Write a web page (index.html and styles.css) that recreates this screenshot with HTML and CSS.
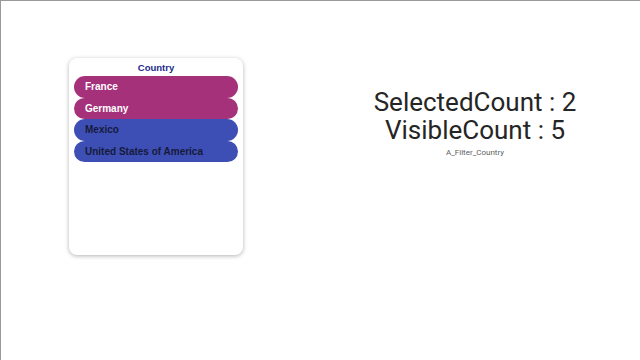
FILE: index.html
```html
<!DOCTYPE html>
<html lang="en">
<head>
  <meta charset="UTF-8" />
  <meta name="viewport" content="width=device-width, initial-scale=1.0" />
  <title>A_Filter_Country</title>
  <link rel="stylesheet" href="styles.css">
</head>
<body>
  <div class="page">
    <div class="card">
      <div class="card-title">Country</div>
      <div class="list">
        <div class="item selected">France</div>
        <div class="item selected">Germany</div>
        <div class="item">Mexico</div>
        <div class="item">United States of America</div>
      </div>
    </div>
    <div class="counts">
      <div class="count">SelectedCount : 2</div>
      <div class="count">VisibleCount : 5</div>
      <div class="caption">A_Filter_Country</div>
    </div>
  </div>
</body>
</html>
```

FILE: styles.css
```css
:root {
  --magenta: #a5317a;
  --azul: #3d4fb5;
  --navy: #1b2a8c;
  --tinta: #161a3a;
}
html, body {
  margin: 0;
  height: 100%;
}
body {
  box-sizing: border-box;
  border-top: 1px solid #9a9a9a;
  border-left: 1px solid #9a9a9a;
  background: white;
  font-family: 'Liberation Sans', Arial, sans-serif;
}
.page {
  display: flex;
  align-items: flex-start;
  padding: 57px 0 0 68px;
}
.card {
  width: 174px;
  height: 197px;
  box-sizing: border-box;
  background: white;
  border-radius: 8px;
  box-shadow: 0 1px 4px rgba(0, 0, 0, 0.3);
  padding: 2px 5px;
}
.card-title {
  text-align: center;
  color: var(--navy);
  font-weight: bold;
  font-size: 9.5px;
  line-height: 15px;
}
.list {
  display: flex;
  flex-direction: column;
  margin-top: 1px;
}
.item {
  height: 21.5px;
  line-height: 21.5px;
  padding-left: 11px;
  border-radius: 11px;
  background: var(--azul);
  color: var(--tinta);
  font-weight: bold;
  font-size: 10px;
}
.item.selected {
  background: var(--magenta);
  color: white;
}
.counts {
  width: 240px;
  margin: 30px 0 0 112px;
  text-align: center;
  color: #252525;
  font-family: Roboto, 'Open Sans', sans-serif;
}
.count {
  font-size: 26px;
  line-height: 28px;
}
.caption {
  margin-top: 3px;
  font-size: 8px;
  line-height: 12px;
  color: #606060;
}
```
